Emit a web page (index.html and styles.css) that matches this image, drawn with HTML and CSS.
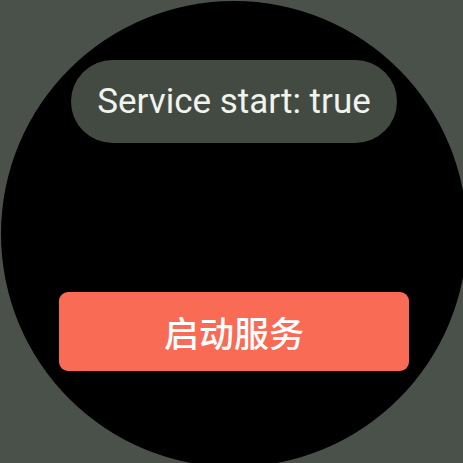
FILE: index.html
```html
<!DOCTYPE html>
<html>
<head>
<meta charset="utf-8">
<link rel="stylesheet" href="styles.css">
</head>
<body>
<div class="screen">
  <div class="status">Service start: true</div>
  <button class="start-btn">启动服务</button>
</div>
</body>
</html>
```
FILE: styles.css
```css
html, body {
  margin: 0;
  padding: 0;
  width: 463px;
  height: 463px;
  overflow: hidden;
  background: #4a514a;
}
body {
  padding: 1px 0 0 1px;
  box-sizing: border-box;
}
.screen {
  width: 466px;
  height: 466px;
  border-radius: 50%;
  background: #000;
  display: flex;
  flex-direction: column;
  align-items: center;
  padding-top: 59px;
  box-sizing: border-box;
  font-family: Roboto, "Noto Sans CJK SC", sans-serif;
}
.status {
  width: 326px;
  height: 83px;
  border-radius: 42px;
  background: #434a42;
  color: #f1f3ee;
  font-size: 35px;
  display: flex;
  align-items: center;
  justify-content: center;
}
.start-btn {
  margin-top: 149px;
  width: 350px;
  height: 79px;
  border: none;
  border-radius: 9px;
  background: #f96b55;
  color: #fff;
  font-family: "Noto Sans CJK SC", sans-serif;
  font-size: 35px;
  font-weight: 500;
  padding: 0;
  display: flex;
  align-items: center;
  justify-content: center;
}
```
